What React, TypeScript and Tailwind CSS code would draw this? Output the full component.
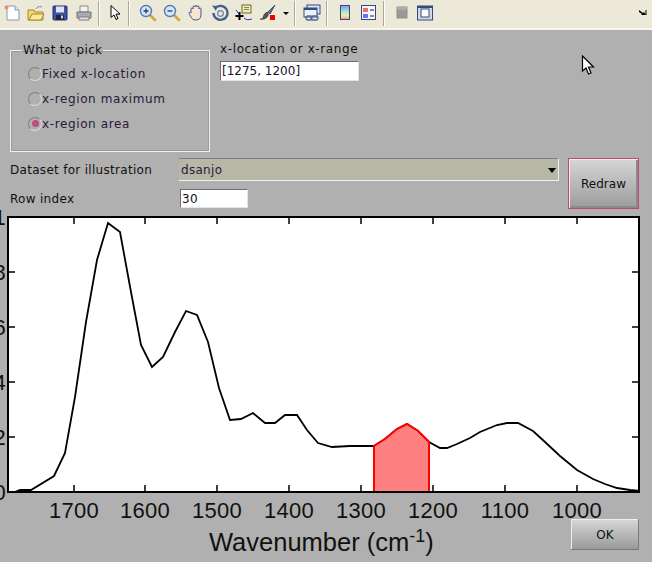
const curve =
  "15,492 20,490 31,490 54,476 65,453 75,397 86,322 97,260 108,223 120,232 131,292 141,345 152,367 163,357 175,332 186,311 197,315 208,342 219,388 230,420 241,419 253,413 265,423 275,423 285,415 297,415 307,430 318,443 332,447 350,446 374,446 385,439 397,429 407,424 418,431 429,442 440,448 447,448 457,444 470,438 480,432 497,425 507,423 518,423 533,431 545,442 560,456 577,470 593,479 605,484 617,488 630,490 640,491"
const area = "374,492 374,446 385,439 397,429 407,424 418,431 429,442 429,492"

const xTicks = [
  { x: 74, label: "1700" },
  { x: 145, label: "1600" },
  { x: 217, label: "1500" },
  { x: 289, label: "1400" },
  { x: 361, label: "1300" },
  { x: 433, label: "1200" },
  { x: 505, label: "1100" },
  { x: 577, label: "1000" },
]

const yTicks = [
  { y: 217, label: "1" },
  { y: 272, label: "0.8" },
  { y: 327, label: "0.6" },
  { y: 382, label: "0.4" },
  { y: 437, label: "0.2" },
  { y: 492, label: "0" },
]

const Sep = () => <div className="mx-[2px] h-[25px] w-[2px] border-l border-[#a9a796] bg-white" />

const Tool = ({ children }: { children: React.ReactNode }) => (
  <div className="flex h-[24px] w-[24px] items-center justify-center">
    <svg width="18" height="18" viewBox="0 0 18 18">{children}</svg>
  </div>
)

const Lens = ({ plus }: { plus: boolean }) => (
  <>
    <path d="M11 11l5 5" stroke="#d9a23a" strokeWidth="2.6" strokeLinecap="round" />
    <circle cx="7" cy="7" r="5.5" fill="#d6e6f5" stroke="#4f7fb5" strokeWidth="1.4" />
    <path d={plus ? "M4.5 7h5M7 4.5v5" : "M4.5 7h5"} stroke="#27406e" strokeWidth="1.3" />
  </>
)

function Toolbar() {
  return (
    <div className="flex h-[30px] items-center border-b-2 border-[#f6f5ee] bg-[#ece9d8] pb-[2px]">
      <Tool>
        <path d="M4 2h8l4 4v10H4z" fill="#fff" stroke="#7f9db9" />
        <path d="M12 2v4h4" fill="#dfe9f5" stroke="#7f9db9" />
        <circle cx="3.5" cy="3.5" r="2" fill="#f08a5a" />
      </Tool>
      <Tool>
        <path d="M1 6h6l1 2h8v8H1z" fill="#f5d76e" stroke="#a8872c" />
        <path d="M2 16l3-6h12l-3 6z" fill="#fbe99a" stroke="#a8872c" />
        <path d="M9 5c1-2 3-3 6-2" fill="none" stroke="#7a8a9a" />
      </Tool>
      <Tool>
        <rect x="2" y="2" width="14" height="14" rx="1" fill="#3f4fa8" stroke="#27306e" />
        <rect x="5" y="2.5" width="8" height="6" fill="#dfe4f5" />
        <rect x="5" y="11" width="8" height="5" fill="#20243f" />
        <rect x="10" y="11.5" width="2" height="3" fill="#cfd3e6" />
      </Tool>
      <Tool>
        <path d="M5 2h8v6H5z" fill="#f3f3f3" stroke="#8a8a8a" />
        <path d="M2 8h14v6H2z" fill="#a9abb0" stroke="#6f7075" />
        <path d="M4 13h10v3H4z" fill="#e3e3e3" stroke="#7d7d7d" />
      </Tool>
      <Sep />
      <Tool>
        <path d="M6 1.5v12l3-2.6 2 4.6 2-.9-2-4.5h4z" fill="#fff" stroke="#000" strokeWidth="1" strokeLinejoin="miter" />
      </Tool>
      <Sep />
      <div className="w-[4px]" />
      <Tool>
        <Lens plus />
      </Tool>
      <Tool>
        <Lens plus={false} />
      </Tool>
      <Tool>
        <path
          d="M4 9V5a1 1 0 012 0V3a1 1 0 012 0v-.5a1 1 0 012 0V3a1 1 0 012 0v2a1 1 0 012 0v6c0 3-2 5-5 5s-4-1-5-3L2 9.500c-.6-1 1-2 2-.5z"
          fill="#fbe3cf"
          stroke="#3d5c94"
          strokeWidth="1"
        />
      </Tool>
      <Tool>
        <path d="M4 4.500A7 7 0 112.500 9" fill="none" stroke="#43618f" strokeWidth="2.400" />
        <path d="M1 1.500l5 .5-1 5z" fill="#43618f" />
        <circle cx="9.500" cy="9.500" r="2.800" fill="none" stroke="#6d86ad" strokeWidth="1.300" />
      </Tool>
      <Tool>
        <rect x="7" y="1" width="9" height="8" fill="#f0eab0" stroke="#6d6a3a" />
        <path d="M9 3.500h5M9 5.500h5" stroke="#8a875a" />
        <path d="M0.500 12h8M4.500 8v8" stroke="#000" strokeWidth="2" />
        <path d="M1 6l3 4M9 14c2 2 5 2 8 1" fill="none" stroke="#1f2fd0" />
      </Tool>
      <Tool>
        <path d="M16 1l-7 7 2 2z" fill="#5577aa" stroke="#34507e" />
        <path d="M8.500 8c-3 1-4 3-4.500 6 -1 1-2 1-3 1 3 1 7 0 8.500-4.500z" fill="#55534c" stroke="#33322d" strokeWidth=".6" />
        <rect x="11" y="11" width="5" height="5" fill="#f00000" />
      </Tool>
      <div className="flex w-[12px] justify-center">
        <div className="h-0 w-0 border-x-[3px] border-t-[3px] border-x-transparent border-t-black" />
      </div>
      <Sep />
      <div className="w-[2px]" />
      <Tool>
        <rect x="4" y="1" width="13" height="9" fill="#dfe6f3" stroke="#2f4d82" />
        <rect x="1" y="4" width="13" height="9" fill="#eef2f8" stroke="#2f4d82" />
        <path d="M1 4h13v2H1z" fill="#2f4d82" />
        <rect x="3" y="12" width="6" height="4" rx="2" fill="none" stroke="#4a6a9c" strokeWidth="1.300" />
        <rect x="8" y="12" width="7" height="4" rx="2" fill="none" stroke="#4a6a9c" strokeWidth="1.300" />
      </Tool>
      <Sep />
      <div className="w-[3px]" />
      <Tool>
        <defs>
          <linearGradient id="cbar" x1="0" y1="0" x2="0" y2="1">
            <stop offset="0" stopColor="#8f8fe8" />
            <stop offset="0.45" stopColor="#a8e8d8" />
            <stop offset="0.7" stopColor="#f5ee9a" />
            <stop offset="1" stopColor="#f59a8a" />
          </linearGradient>
        </defs>
        <rect x="4.500" y="1.500" width="9" height="14" fill="url(#cbar)" stroke="#2f4d82" />
      </Tool>
      <Tool>
        <rect x="1.500" y="1.500" width="14" height="14" fill="#f4f6fb" stroke="#2f4d82" />
        <rect x="3" y="4" width="5" height="4" fill="#ee6f6f" />
        <rect x="3" y="10" width="5" height="4" fill="#6f6fee" />
        <path d="M10 6h4M10 12h4" stroke="#222" />
      </Tool>
      <Sep />
      <div className="w-[3px]" />
      <Tool>
        <rect x="4" y="3" width="10" height="11" fill="#999" stroke="#8c8c8c" />
        <rect x="4" y="3" width="10" height="3" fill="#aaa" />
      </Tool>
      <div className="-ml-[1px]">
        <Tool>
          <rect x="1.500" y="2" width="15" height="14" fill="#d5d8e0" stroke="#2f4d82" />
          <rect x="1.500" y="2" width="15" height="2" fill="#2f4d82" />
          <rect x="5" y="5" width="8" height="8" fill="#fff" stroke="#2f4d82" />
        </Tool>
      </div>
      <div className="ml-auto mr-[3px] flex w-[10px] items-center">
        <svg width="9" height="8" viewBox="0 0 9 8">
          <path d="M0 1l4 3 1-1 2 3h-5l1-1-3-2z" fill="#000" />
          <path d="M7 1v5" stroke="#000" />
        </svg>
      </div>
    </div>
  )
}

function Radio({ label, checked }: { label: string; checked?: boolean }) {
  return (
    <div className="flex h-[25px] items-center">
      <div className="flex h-[14px] w-[14px] items-center justify-center rounded-full border border-b-[#dcdcdc] border-l-[#808080] border-r-[#dcdcdc] border-t-[#808080]">
        {checked && <div className="h-[7px] w-[7px] rounded-full bg-[#b8507f]" />}
      </div>
      <span className="tracking-[0.62px] text-[#2a1a38]">{label}</span>
    </div>
  )
}

function Chart() {
  return (
    <svg width="652" height="316" viewBox="0 209 652 316" className="block">
      <rect x="8" y="217" width="631" height="275" fill="#fff" />
      <polyline points={curve} fill="none" stroke="#000" strokeWidth="1.800" />
      <polygon points={area} fill="#ff8080" stroke="#ff0000" strokeWidth="2" />
      <rect x="8" y="217" width="631" height="275" fill="none" stroke="#000" strokeWidth="2" />
      {xTicks.map((t) => (
        <g key={t.x}>
          <path d={`M${t.x} 492v-7M${t.x} 217v7`} stroke="#000" strokeWidth="1.500" />
          <text x={t.x} y="518" textAnchor="middle" fontSize="22" fontFamily="'Liberation Sans', sans-serif" fill="#111">
            {t.label}
          </text>
        </g>
      ))}
      {yTicks.map((t) => (
        <g key={t.y}>
          <path d={`M8 ${t.y}h7M639 ${t.y}h-7`} stroke="#000" strokeWidth="1.500" />
          <text x="6" y={t.y + 8} textAnchor="end" fontSize="22" fontFamily="'Liberation Sans', sans-serif" fill="#111">
            {t.label}
          </text>
        </g>
      ))}
    </svg>
  )
}

export default function App() {
  return (
    <div className="relative h-[562px] w-[652px] overflow-hidden bg-[#b0b0b0] font-['DejaVu_Sans',sans-serif] text-[12px] leading-[14px] tracking-[0.3px] text-[#111]">
      <Toolbar />

      <div className="h-[179px]">
        <div className="flex h-[91px] pl-[10px] pt-[11px]">
          <fieldset className="relative mt-[2px] h-[109px] w-[200px] border border-[#f0f0f0] pl-[17px] pt-[7px] shadow-[inset_0_0_0_1px_#9a9a9a]">
            <legend className="-ml-[6px] px-[1px] text-[12px]">What to pick</legend>
            <div className="-mt-[3px]">
              <Radio label="Fixed x-location" />
              <Radio label="x-region maximum" />
              <Radio label="x-region area" checked />
            </div>
          </fieldset>
          <div className="ml-[10px] flex flex-col gap-[5px] pt-[1px]">
            <span className="tracking-[0.62px]">x-location or x-range</span>
            <div className="flex h-[20px] w-[139px] items-center border border-b-[#e4e4e4] border-l-[#6a6a80] border-r-[#e4e4e4] border-t-[#6a6a80] bg-white pl-[1px] tracking-normal text-[#1a1030]">
              [1275, 1200]
            </div>
          </div>
        </div>

        <div className="mt-[37px] flex pl-[10px]">
          <div className="w-[558px]">
            <div className="flex h-[23px] items-center">
              <span className="w-[169px]">Dataset for illustration</span>
              <div className="relative flex h-[23px] w-[380px] items-center border-b border-r border-t border-b-[#f0f0f0] border-r-[#f0f0f0] border-t-[#808080] bg-[#b7b7a8] pl-[2px] text-[#2a1a38]">
                dsanjo
                <div className="absolute right-[2px] top-[9px] h-0 w-0 border-x-[4px] border-t-[5px] border-x-transparent border-t-black" />
              </div>
            </div>
            <div className="mt-[8px] flex h-[19px] items-center">
              <span className="w-[170px]">Row index</span>
              <div className="flex h-[19px] w-[68px] items-center border border-b-[#e4e4e4] border-l-[#6a6a80] border-r-[#e4e4e4] border-t-[#6a6a80] bg-white pl-[1px]">
                30
              </div>
            </div>
          </div>
          <button className="h-[51px] w-[71px] border border-[#c0467c] bg-gradient-to-b from-[#d6d6d6] to-[#9c9c9c] text-[12px] tracking-normal text-[#111] shadow-[inset_1px_1px_0_#eeeeee,inset_-2px_-2px_0_#8a8a8a]">
            Redraw
          </button>
        </div>
      </div>

      <Chart />

      <div className="-mt-[5px] flex h-[42px] items-start">
        <div className="pl-[209px] pt-[1px] font-['Liberation_Sans',sans-serif] text-[25.5px] leading-[42px] tracking-normal text-[#111]">
          Wavenumber (cm<sup className="text-[18px]">-1</sup>)
        </div>
        <button className="ml-auto mr-[13px] mt-[-1px] h-[31px] w-[68px] bg-gradient-to-b from-[#d8d8d8] to-[#989898] text-[12px] tracking-normal text-[#111] shadow-[inset_-1px_-1px_0_#7a7a7a,inset_1px_1px_0_#eeeeee]">
          OK
        </button>
      </div>

      {/* mouse pointer */}
      <svg width="14" height="21" viewBox="0 0 14 21" className="absolute left-[581px] top-[55px]">
        <path d="M1.500 1v15l3.500-3 2.500 6 2.500-1-2.500-6h5z" fill="#fff" stroke="#000" strokeWidth="1.200" />
      </svg>
    </div>
  )
}
